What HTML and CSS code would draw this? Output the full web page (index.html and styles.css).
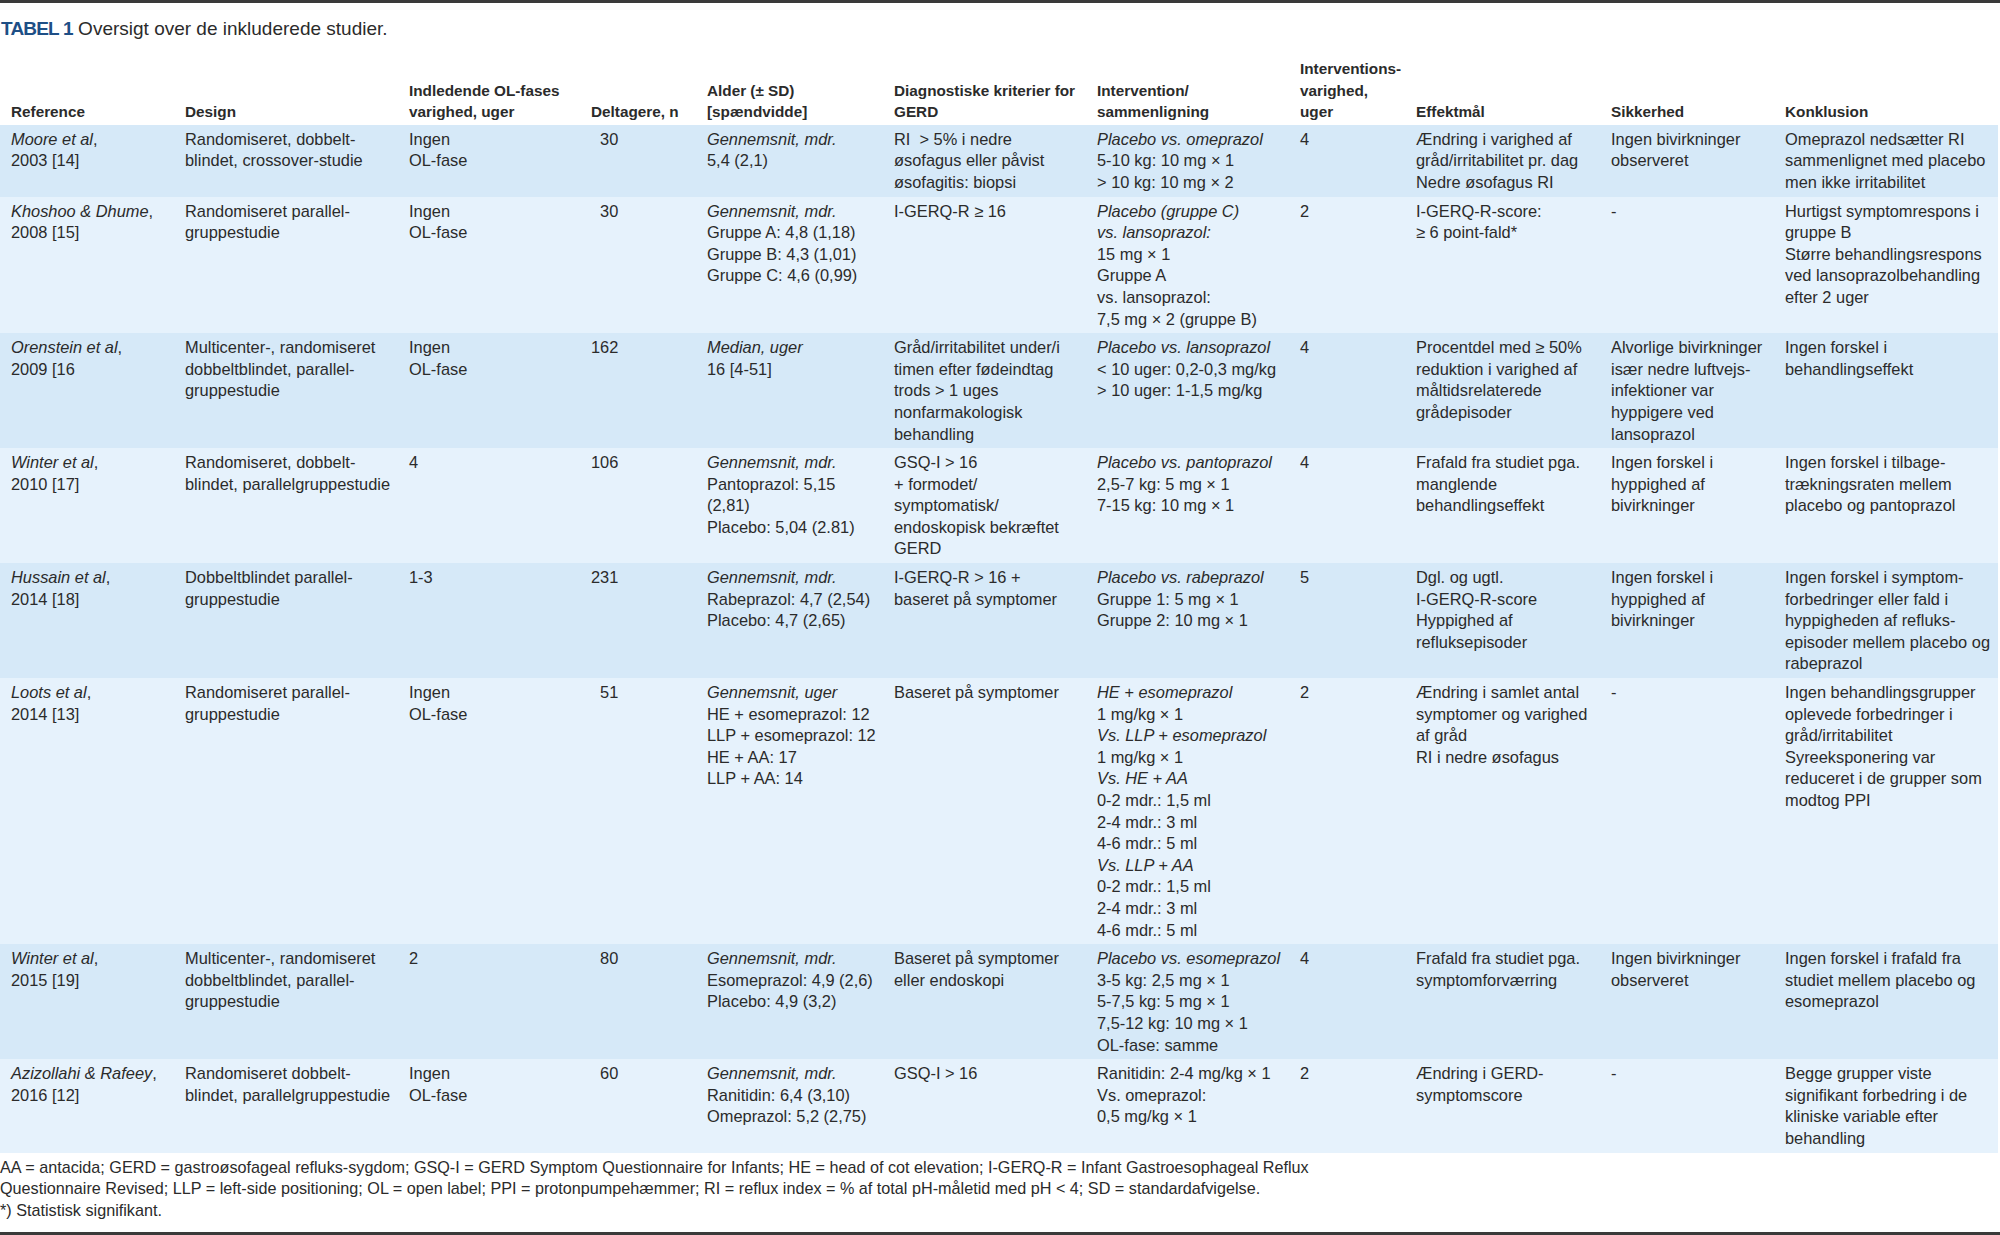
FILE: index.html
```html
<!DOCTYPE html>
<html lang="da">
<head>
<meta charset="utf-8">
<title>Tabel 1</title>
<link rel="stylesheet" href="styles.css">
</head>
<body>
<div class="page">
  <h1 class="caption"><span class="label">TABEL 1</span> Oversigt over de inkluderede studier.</h1>
  <table class="studies">
    <colgroup>
      <col class="c-ref"><col class="c-design"><col class="c-ol"><col class="c-n"><col class="c-age"><col class="c-diag"><col class="c-int"><col class="c-dur"><col class="c-eff"><col class="c-safe"><col class="c-concl">
    </colgroup>
    <thead>
      <tr>
        <th>Reference</th>
        <th>Design</th>
        <th>Indledende OL-fases<br>varighed, uger</th>
        <th>Deltagere, n</th>
        <th>Alder (± SD)<br>[spændvidde]</th>
        <th>Diagnostiske kriterier for<br>GERD</th>
        <th>Intervention/<br>sammenligning</th>
        <th>Interventions-<br>varighed,<br>uger</th>
        <th>Effektmål</th>
        <th>Sikkerhed</th>
        <th>Konklusion</th>
      </tr>
    </thead>
    <tbody>
      <tr class="dark">
        <td><i>Moore et al</i>,<br>2003 [14]</td>
        <td>Randomiseret, dobbelt-<br>blindet, crossover-studie</td>
        <td>Ingen<br>OL-fase</td>
        <td><span class="num">30</span></td>
        <td><i>Gennemsnit, mdr.</i><br>5,4 (2,1)</td>
        <td>RI &nbsp;&gt; 5% i nedre<br>øsofagus eller påvist<br>øsofagitis: biopsi</td>
        <td><i>Placebo vs. omeprazol</i><br>5-10 kg: 10 mg × 1<br>&gt; 10 kg: 10 mg × 2</td>
        <td>4</td>
        <td>Ændring i varighed af<br>gråd/irritabilitet pr. dag<br>Nedre øsofagus RI</td>
        <td>Ingen bivirkninger<br>observeret</td>
        <td>Omeprazol nedsætter RI<br>sammenlignet med placebo<br>men ikke irritabilitet</td>
      </tr>
      <tr class="light">
        <td><i>Khoshoo &amp; Dhume</i>,<br>2008 [15]</td>
        <td>Randomiseret parallel-<br>gruppestudie</td>
        <td>Ingen<br>OL-fase</td>
        <td><span class="num">30</span></td>
        <td><i>Gennemsnit, mdr.</i><br>Gruppe A: 4,8 (1,18)<br>Gruppe B: 4,3 (1,01)<br>Gruppe C: 4,6 (0,99)</td>
        <td>I-GERQ-R ≥ 16</td>
        <td><i>Placebo (gruppe C)<br>vs. lansoprazol:</i><br>15 mg × 1<br>Gruppe A<br>vs. lansoprazol:<br>7,5 mg × 2 (gruppe B)</td>
        <td>2</td>
        <td>I-GERQ-R-score:<br>≥ 6 point-fald*</td>
        <td>-</td>
        <td>Hurtigst symptomrespons i<br>gruppe B<br>Større behandlingsrespons<br>ved lansoprazolbehandling<br>efter 2 uger</td>
      </tr>
      <tr class="dark">
        <td><i>Orenstein et al</i>,<br>2009 [16</td>
        <td>Multicenter-, randomiseret<br>dobbeltblindet, parallel-<br>gruppestudie</td>
        <td>Ingen<br>OL-fase</td>
        <td><span class="num">162</span></td>
        <td><i>Median, uger</i><br>16 [4-51]</td>
        <td>Gråd/irritabilitet under/i<br>timen efter fødeindtag<br>trods &gt; 1 uges<br>nonfarmakologisk<br>behandling</td>
        <td><i>Placebo vs. lansoprazol</i><br>&lt; 10 uger: 0,2-0,3 mg/kg<br>&gt; 10 uger: 1-1,5 mg/kg</td>
        <td>4</td>
        <td>Procentdel med ≥ 50%<br>reduktion i varighed af<br>måltidsrelaterede<br>grådepisoder</td>
        <td>Alvorlige bivirkninger<br>især nedre luftvejs-<br>infektioner var<br>hyppigere ved<br>lansoprazol</td>
        <td>Ingen forskel i<br>behandlingseffekt</td>
      </tr>
      <tr class="light">
        <td><i>Winter et al</i>,<br>2010 [17]</td>
        <td>Randomiseret, dobbelt-<br>blindet, parallelgruppestudie</td>
        <td>4</td>
        <td><span class="num">106</span></td>
        <td><i>Gennemsnit, mdr.</i><br>Pantoprazol: 5,15<br>(2,81)<br>Placebo: 5,04 (2.81)</td>
        <td>GSQ-I &gt; 16<br>+ formodet/<br>symptomatisk/<br>endoskopisk bekræftet<br>GERD</td>
        <td><i>Placebo vs. pantoprazol</i><br>2,5-7 kg: 5 mg × 1<br>7-15 kg: 10 mg × 1</td>
        <td>4</td>
        <td>Frafald fra studiet pga.<br>manglende<br>behandlingseffekt</td>
        <td>Ingen forskel i<br>hyppighed af<br>bivirkninger</td>
        <td>Ingen forskel i tilbage-<br>trækningsraten mellem<br>placebo og pantoprazol</td>
      </tr>
      <tr class="dark">
        <td><i>Hussain et al</i>,<br>2014 [18]</td>
        <td>Dobbeltblindet parallel-<br>gruppestudie</td>
        <td>1-3</td>
        <td><span class="num">231</span></td>
        <td><i>Gennemsnit, mdr.</i><br>Rabeprazol: 4,7 (2,54)<br>Placebo: 4,7 (2,65)</td>
        <td>I-GERQ-R &gt; 16 +<br>baseret på symptomer</td>
        <td><i>Placebo vs. rabeprazol</i><br>Gruppe 1: 5 mg × 1<br>Gruppe 2: 10 mg × 1</td>
        <td>5</td>
        <td>Dgl. og ugtl.<br>I-GERQ-R-score<br>Hyppighed af<br>refluksepisoder</td>
        <td>Ingen forskel i<br>hyppighed af<br>bivirkninger</td>
        <td>Ingen forskel i symptom-<br>forbedringer eller fald i<br>hyppigheden af refluks-<br>episoder mellem placebo og<br>rabeprazol</td>
      </tr>
      <tr class="light">
        <td><i>Loots et al</i>,<br>2014 [13]</td>
        <td>Randomiseret parallel-<br>gruppestudie</td>
        <td>Ingen<br>OL-fase</td>
        <td><span class="num">51</span></td>
        <td><i>Gennemsnit, uger</i><br>HE + esomeprazol: 12<br>LLP + esomeprazol: 12<br>HE + AA: 17<br>LLP + AA: 14</td>
        <td>Baseret på symptomer</td>
        <td><i>HE + esomeprazol</i><br>1 mg/kg × 1<br><i>Vs. LLP + esomeprazol</i><br>1 mg/kg × 1<br><i>Vs. HE + AA</i><br>0-2 mdr.: 1,5 ml<br>2-4 mdr.: 3 ml<br>4-6 mdr.: 5 ml<br><i>Vs. LLP + AA</i><br>0-2 mdr.: 1,5 ml<br>2-4 mdr.: 3 ml<br>4-6 mdr.: 5 ml</td>
        <td>2</td>
        <td>Ændring i samlet antal<br>symptomer og varighed<br>af gråd<br>RI i nedre øsofagus</td>
        <td>-</td>
        <td>Ingen behandlingsgrupper<br>oplevede forbedringer i<br>gråd/irritabilitet<br>Syreeksponering var<br>reduceret i de grupper som<br>modtog PPI</td>
      </tr>
      <tr class="dark">
        <td><i>Winter et al</i>,<br>2015 [19]</td>
        <td>Multicenter-, randomiseret<br>dobbeltblindet, parallel-<br>gruppestudie</td>
        <td>2</td>
        <td><span class="num">80</span></td>
        <td><i>Gennemsnit, mdr.</i><br>Esomeprazol: 4,9 (2,6)<br>Placebo: 4,9 (3,2)</td>
        <td>Baseret på symptomer<br>eller endoskopi</td>
        <td><i>Placebo vs. esomeprazol</i><br>3-5 kg: 2,5 mg × 1<br>5-7,5 kg: 5 mg × 1<br>7,5-12 kg: 10 mg × 1<br>OL-fase: samme</td>
        <td>4</td>
        <td>Frafald fra studiet pga.<br>symptomforværring</td>
        <td>Ingen bivirkninger<br>observeret</td>
        <td>Ingen forskel i frafald fra<br>studiet mellem placebo og<br>esomeprazol</td>
      </tr>
      <tr class="light">
        <td><i>Azizollahi &amp; Rafeey</i>,<br>2016 [12]</td>
        <td>Randomiseret dobbelt-<br>blindet, parallelgruppestudie</td>
        <td>Ingen<br>OL-fase</td>
        <td><span class="num">60</span></td>
        <td><i>Gennemsnit, mdr.</i><br>Ranitidin: 6,4 (3,10)<br>Omeprazol: 5,2 (2,75)</td>
        <td>GSQ-I &gt; 16</td>
        <td>Ranitidin: 2-4 mg/kg × 1<br>Vs. omeprazol:<br>0,5 mg/kg × 1</td>
        <td>2</td>
        <td>Ændring i GERD-<br>symptomscore</td>
        <td>-</td>
        <td>Begge grupper viste<br>signifikant forbedring i de<br>kliniske variable efter<br>behandling</td>
      </tr>
    </tbody>
  </table>
  <div class="notes">
    <p>AA = antacida; GERD = gastroøsofageal refluks-sygdom; GSQ-I = GERD Symptom Questionnaire for Infants; HE = head of cot elevation; I-GERQ-R = Infant Gastroesophageal Reflux Questionnaire Revised; LLP = left-side positioning; OL = open label; PPI = protonpumpehæmmer; RI = reflux index = % af total pH-måletid med pH &lt; 4; SD = standardafvigelse.</p>
    <p>*) Statistisk signifikant.</p>
  </div>
</div>
</body>
</html>
```
FILE: styles.css
```css
html, body {
  margin: 0;
  padding: 0;
  background: #ffffff;
}

body {
  font-family: "Liberation Sans", Arial, sans-serif;
  color: #2b2b2b;
}

.page {
  width: 2000px;
  height: 1235px;
  box-sizing: border-box;
  border-top: 3px solid #3a3a3a;
  border-bottom: 3px solid #3a3a3a;
  display: flex;
  flex-direction: column;
  overflow: hidden;
}

.caption {
  margin: 14px 0 0 1px;
  font-size: 19px;
  line-height: 23px;
  font-weight: normal;
  color: #2b2b2b;
}

.caption .label {
  color: #1e4f86;
  font-weight: bold;
  letter-spacing: -0.8px;
}

.studies {
  margin-top: 15px;
  width: 1998px;
  border-collapse: collapse;
  table-layout: fixed;
  font-size: 16.4px;
  line-height: 21.6px;
}

.c-ref { width: 174px; }
.c-design { width: 224px; }
.c-ol { width: 182px; }
.c-n { width: 116px; }
.c-age { width: 187px; }
.c-diag { width: 203px; }
.c-int { width: 203px; }
.c-dur { width: 116px; }
.c-eff { width: 195px; }
.c-safe { width: 174px; }
.c-concl { width: 224px; }

.studies th {
  text-align: left;
  vertical-align: bottom;
  font-weight: bold;
  font-size: 15.3px;
  padding: 3px 4px 2px 11px;
  white-space: nowrap;
}

.studies td {
  vertical-align: top;
  padding: 4px 4px 3px 11px;
  white-space: nowrap;
}

.studies tr.dark td { background: #d6e9f8; }
.studies tr.light td { background: #e6f2fc; }

.num {
  display: inline-block;
  width: 3ch;
  text-align: right;
}

.notes {
  margin-top: 4px;
  max-width: 1340px;
  font-size: 16.2px;
  line-height: 21.6px;
}

.notes p {
  margin: 0;
}
```
